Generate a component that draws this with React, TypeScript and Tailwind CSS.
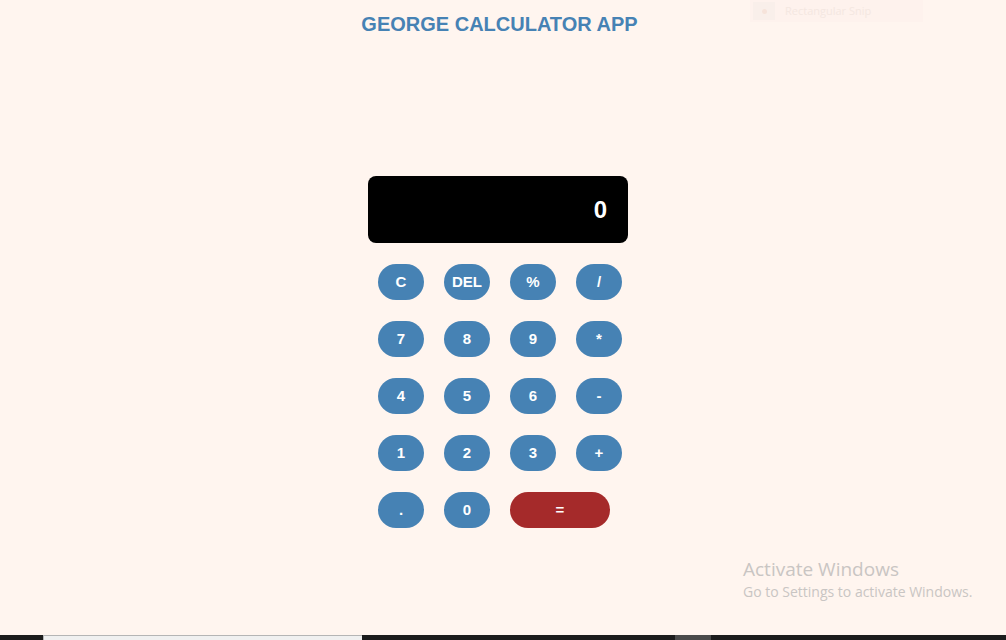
const rows: string[][] = [
  ['C', 'DEL', '%', '/'],
  ['7', '8', '9', '*'],
  ['4', '5', '6', '-'],
  ['1', '2', '3', '+'],
];

const keyCls = 'h-[36px] w-[46px] shrink-0 rounded-full bg-[#4682b4] text-[15px] font-bold text-white';

export default function App() {
  return (
    <div className="relative h-[640px] w-[1006px] overflow-hidden bg-[#fff5ef] font-['Liberation_Sans',Arial,sans-serif]">
      {/* faint snipping tool bar */}
      <div className="absolute left-[750px] top-0 flex h-[22px] w-[173px] items-center bg-[#fef2ed]">
        <div className="ml-[3px] flex h-[18px] w-[22px] items-center justify-center bg-[#f9efea]">
          <div className="h-[5px] w-[5px] rounded-full bg-[#f6e3da]" />
        </div>
        <span className="ml-[10px] font-['Open_Sans',sans-serif] text-[11px] text-[#f4e7e1]">Rectangular Snip</span>
      </div>

      <h1 className="pr-[7px] pt-[12px] text-center text-[20px] font-bold leading-[24px] text-[#4682b4]">
        GEORGE CALCULATOR APP
      </h1>

      <div className="ml-[368px] mt-[140px] w-[260px]">
        <div className="flex h-[67px] items-center justify-end rounded-[8px] bg-black px-[21px] text-[24px] font-bold text-white">
          0
        </div>
        <div className="mt-[21px] flex flex-col gap-[21px] pl-[10px]">
          {rows.map((row, i) => (
            <div key={i} className="flex gap-[20px]">
              {row.map((k) => (
                <button key={k} className={keyCls}>
                  {k}
                </button>
              ))}
            </div>
          ))}
          <div className="flex gap-[20px]">
            <button className={keyCls}>.</button>
            <button className={keyCls}>0</button>
            <button className="h-[36px] w-[100px] shrink-0 rounded-full bg-[#a52a2a] text-[15px] font-bold text-white">=</button>
          </div>
        </div>
      </div>

      {/* windows watermark */}
      <div className="absolute left-[743px] top-[557px] font-['Open_Sans',sans-serif] text-[#c9c5c3]">
        <div className="text-[19px] leading-[24px]">Activate Windows</div>
        <div className="text-[14px] leading-[22px]">Go to Settings to activate Windows.</div>
      </div>

      {/* taskbar */}
      <div className="absolute bottom-0 left-0 flex h-[5px] w-full bg-[#1c1c1c]">
        <div className="ml-[43px] h-full w-[319px] border-l border-t border-[#b5b5b5] bg-[#f0f0f0]" />
        <div className="ml-[313px] h-full w-[36px] bg-[#4a4a4a]" />
      </div>
    </div>
  );
}
